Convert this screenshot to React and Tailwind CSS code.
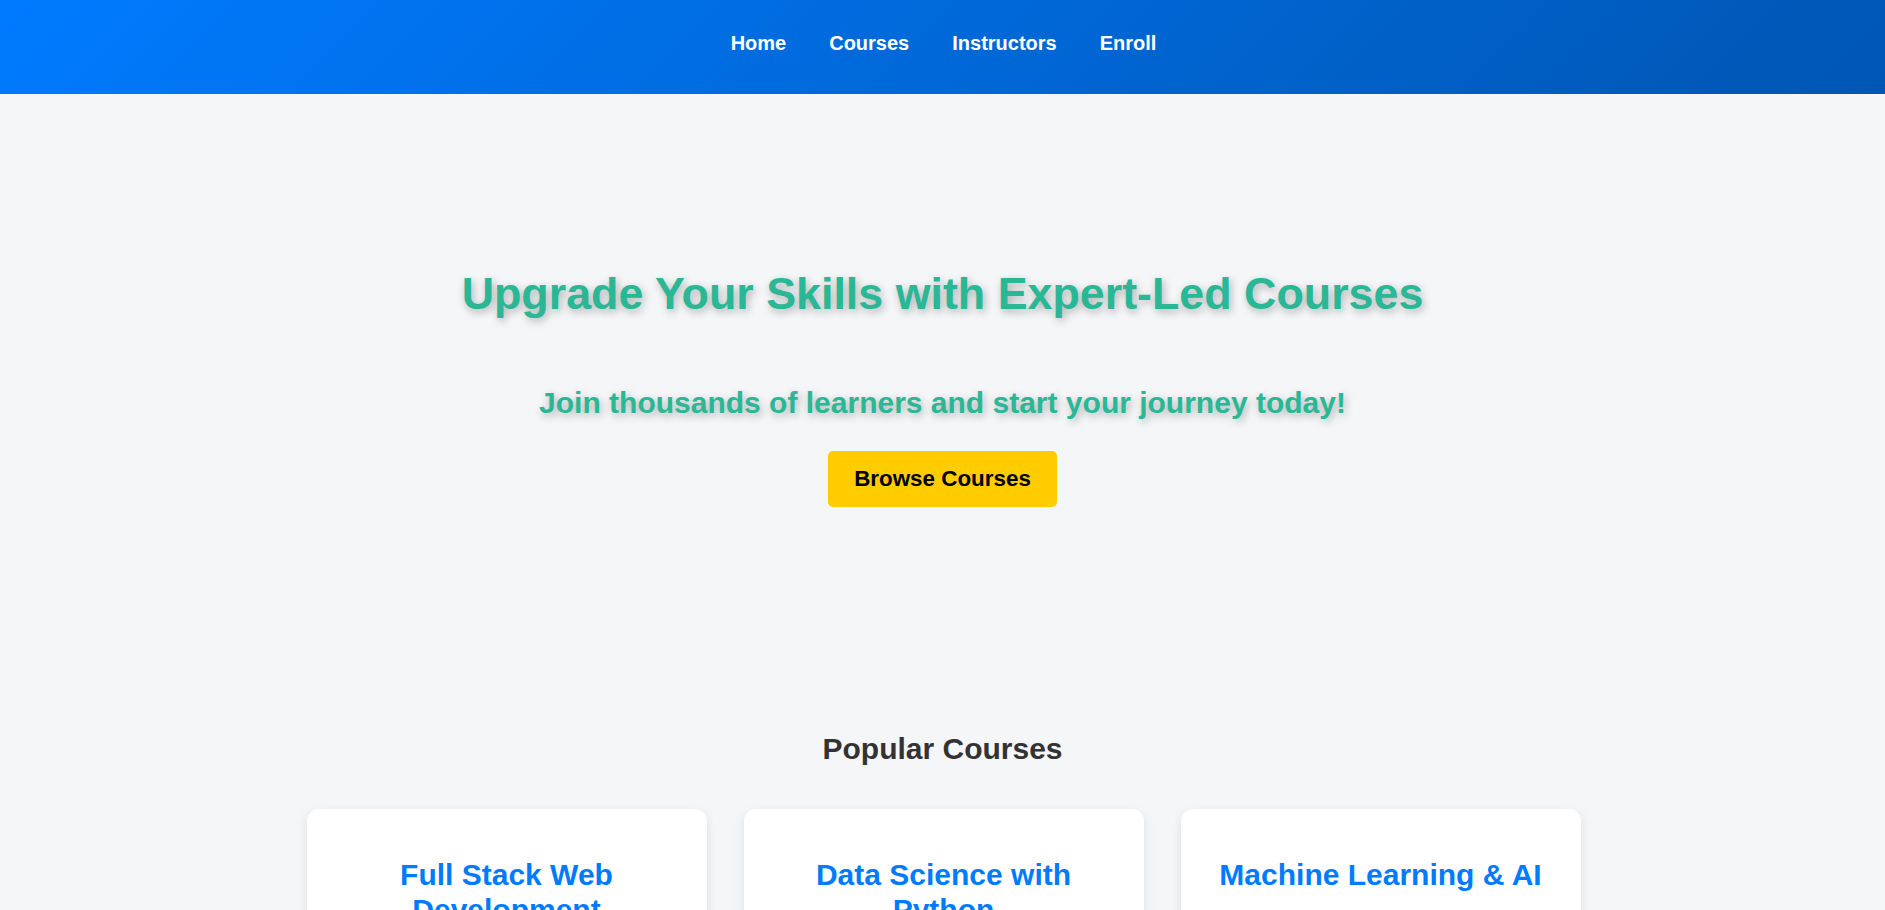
export default function App() {
  const font = { fontFamily: '"Liberation Sans", Arial, sans-serif' };
  const courses = ["Full Stack Web Development", "Data Science with Python", "Machine Learning & AI"];
  return (
    <div className="min-h-[910px] bg-[#f5f6f8]" style={font}>
      <nav className="h-[94px] bg-[linear-gradient(135deg,#007bff,#0056b3)] flex justify-center pt-[32px] pl-[2px]">
        <ul className="flex gap-[43px] h-fit">
          {["Home", "Courses", "Instructors", "Enroll"].map((t) => (
            <li key={t}>
              <a className="text-white font-bold text-[20px] leading-[1.15]">{t}</a>
            </li>
          ))}
        </ul>
      </nav>
      <section className="flex flex-col items-center pt-[174px]">
        <h1 className="text-[44.8px] leading-[1.15] font-bold text-[#2ab795] [text-shadow:2px_3px_8px_rgba(0,0,0,0.3)]">
          Upgrade Your Skills with Expert-Led Courses
        </h1>
        <p className="mt-[66px] text-[30px] leading-[1.15] font-bold text-[#2ab795] [text-shadow:2px_3px_8px_rgba(0,0,0,0.3)]">
          Join thousands of learners and start your journey today!
        </p>
        <button className="mt-[31px] bg-[#ffcc00] text-black font-bold text-[22.4px] leading-[1.15] px-[26px] py-[15px] rounded-[5px]">
          Browse Courses
        </button>
      </section>
      <section className="flex flex-col items-center mt-[225px]">
        <h2 className="text-[30px] leading-[1.15] font-bold text-[#333333]">Popular Courses</h2>
        <div className="mt-[43px] flex justify-center gap-[37px] pl-[2px]">
          {courses.map((c) => (
            <div key={c} className="w-[400px] h-[200px] bg-white rounded-[12px] shadow-[0_4px_12px_rgba(0,0,0,0.1)] p-5 text-center">
              <h3 className="mt-[29px] text-[30px] leading-[1.15] font-bold text-[#007bff]">{c}</h3>
            </div>
          ))}
        </div>
      </section>
    </div>
  );
}
